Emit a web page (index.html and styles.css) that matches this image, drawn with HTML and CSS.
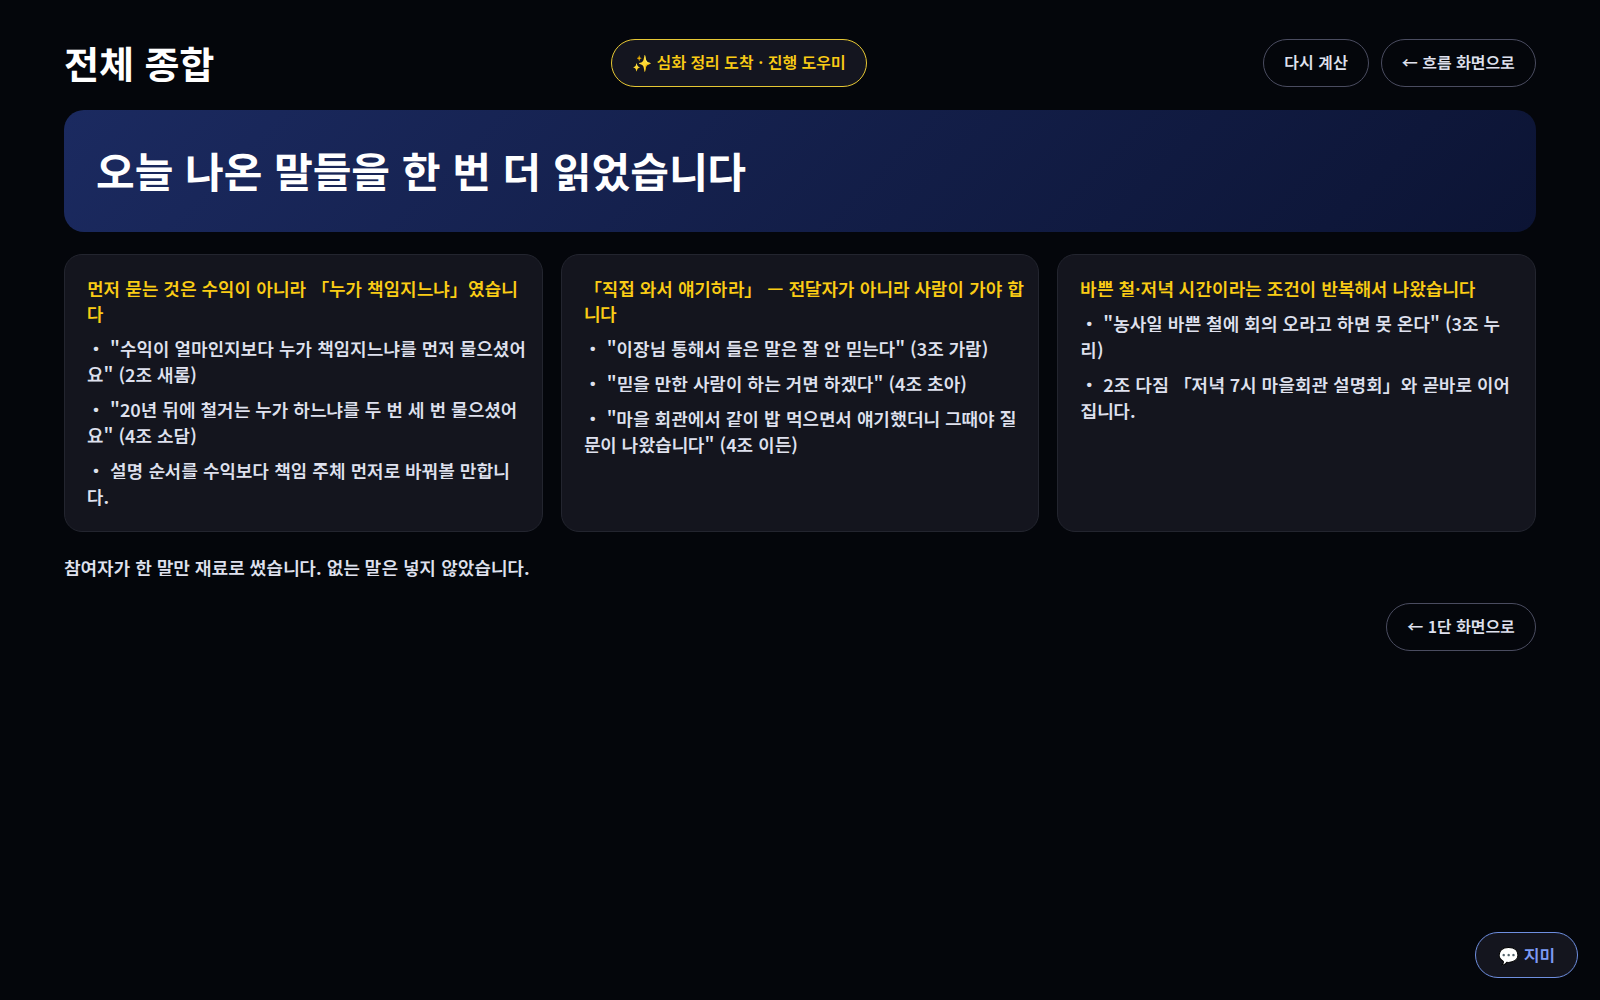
FILE: index.html
```html
<!DOCTYPE html>
<html lang="ko">
<head>
    <meta charset="UTF-8">
    <meta name="viewport" content="width=device-width, initial-scale=1.0">
    <title>전체 종합</title>
    <link rel="stylesheet" href="styles.css">
</head>
<body>

    <main class="page">
        <header class="topbar">
            <h1 class="page-title">전체 종합</h1>
            <button type="button" class="button button-notice">✨ 심화 정리 도착 · 진행 도우미</button>
            <div class="actions">
                <button type="button" class="button">다시 계산</button>
                <button type="button" class="button">← 흐름 화면으로</button>
            </div>
        </header>

        <section class="hero">
            <h2 class="hero-title">오늘 나온 말들을 한 번 더 읽었습니다</h2>
        </section>

        <section class="cards">
            <article class="card">
                <h3 class="card-title">먼저 묻는 것은 수익이 아니라 「누가 책임지느냐」였습니다</h3>
                <p>・ "수익이 얼마인지보다 누가 책임지느냐를 먼저 물으셨어요" (2조 새롬)</p>
                <p>・ "20년 뒤에 철거는 누가 하느냐를 두 번 세 번 물으셨어요" (4조 소담)</p>
                <p>・ 설명 순서를 수익보다 책임 주체 먼저로 바꿔볼 만합니다.</p>
            </article>
            <article class="card">
                <h3 class="card-title">「직접 와서 얘기하라」 — 전달자가 아니라 사람이 가야 합니다</h3>
                <p>・ "이장님 통해서 들은 말은 잘 안 믿는다" (3조 가람)</p>
                <p>・ "믿을 만한 사람이 하는 거면 하겠다" (4조 초아)</p>
                <p>・ "마을 회관에서 같이 밥 먹으면서 얘기했더니 그때야 질문이 나왔습니다" (4조 이든)</p>
            </article>
            <article class="card">
                <h3 class="card-title">바쁜 철·저녁 시간이라는 조건이 반복해서 나왔습니다</h3>
                <p>・ "농사일 바쁜 철에 회의 오라고 하면 못 온다" (3조 누리)</p>
                <p>・ 2조 다짐 「저녁 7시 마을회관 설명회」와 곧바로 이어집니다.</p>
            </article>
        </section>

        <p class="note">참여자가 한 말만 재료로 썼습니다. 없는 말은 넣지 않았습니다.</p>

        <div class="footer">
            <button type="button" class="button">← 1단 화면으로</button>
        </div>
    </main>

    <button type="button" class="chat-button">💬 지미</button>

</body>
</html>
```
FILE: styles.css
```css
* {
    box-sizing: border-box;
}

body {
    margin: 0;
    min-height: 100vh;
    background: #04060b;
    color: #dfe1ee;
    font-family: "Noto Sans KR", "Noto Sans CJK KR", sans-serif;
    font-size: 18px;
    font-weight: 600;
    line-height: 26px;
}

h1, h2, h3, p {
    margin: 0;
}

.page {
    padding: 39px 64px;
}

.topbar {
    display: flex;
    justify-content: space-between;
    align-items: center;
    margin-bottom: 23px;
}

.page-title {
    color: #ffffff;
    font-size: 38px;
    font-weight: 700;
    line-height: 48px;
}

.actions {
    display: flex;
    gap: 12px;
}

.button {
    padding: 11px 20px 12px;
    border: 1px solid #4a4c60;
    border-radius: 24px;
    background: transparent;
    color: #dfe1ee;
    font-family: inherit;
    font-size: 16px;
    font-weight: 600;
    line-height: 23px;
    cursor: pointer;
}

.button-notice {
    border-color: #e6c734;
    background: #14151f;
    color: #facc15;
}

.hero {
    padding: 31px 32px 33px;
    border-radius: 20px;
    background: linear-gradient(135deg, #1b2a60, #0c1434);
}

.hero-title {
    color: #ffffff;
    font-size: 42px;
    font-weight: 700;
    line-height: 58px;
}

.cards {
    display: grid;
    grid-template-columns: repeat(3, 1fr);
    gap: 18px;
    margin-top: 22px;
}

.card {
    display: flex;
    flex-direction: column;
    gap: 9px;
    padding: 21px 14px 22px 22px;
    border: 1px solid #23252f;
    border-radius: 18px;
    background: #14151e;
}

.card-title {
    color: #facc15;
    font-size: 18px;
    font-weight: 600;
    line-height: 25px;
}

.note {
    margin-top: 22px;
}

.footer {
    display: flex;
    justify-content: flex-end;
    margin-top: 23px;
}

.chat-button {
    position: fixed;
    right: 22px;
    bottom: 22px;
    height: 46px;
    padding: 0 22px 2px;
    border: 1px solid #6f8fe0;
    border-radius: 23px;
    background: #14151e;
    color: #7d9bf5;
    font-family: inherit;
    font-size: 17px;
    font-weight: 600;
    cursor: pointer;
}
```
